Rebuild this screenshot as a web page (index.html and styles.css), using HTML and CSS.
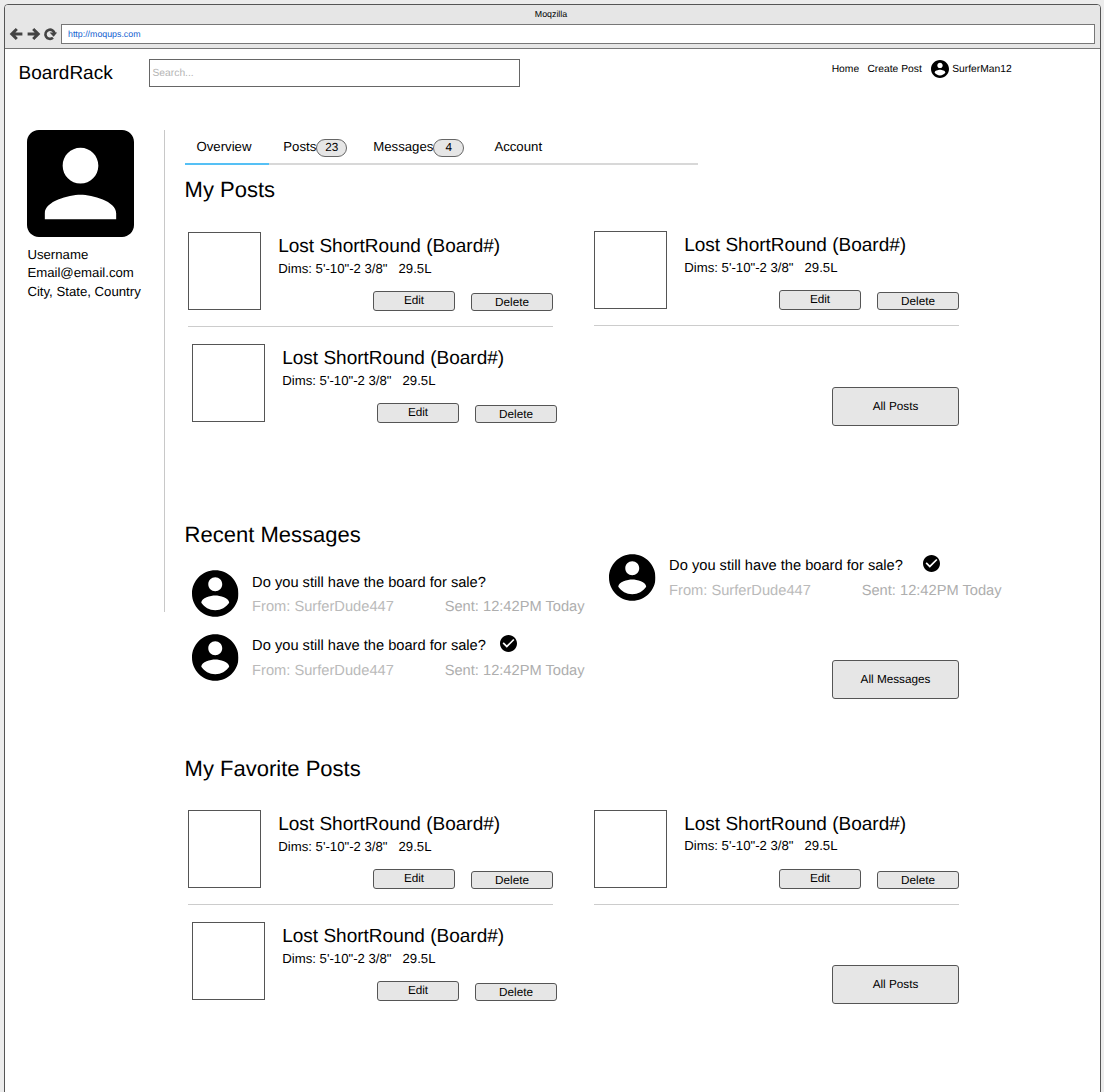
FILE: index.html
```html
<!DOCTYPE html>
<html lang="en">
<head>
<meta charset="utf-8">
<title>BoardRack</title>
<link rel="stylesheet" href="styles.css">
</head>
<body>
<svg class="sprite" width="0" height="0">
  <symbol id="account" viewBox="2 2 20 20"><path d="M12 2C6.48 2 2 6.48 2 12s4.48 10 10 10 10-4.48 10-10S17.52 2 12 2zm0 3c1.66 0 3 1.34 3 3s-1.34 3-3 3-3-1.34-3-3 1.34-3 3-3zm0 14.2c-2.5 0-4.71-1.28-6-3.22.03-1.99 4-3.08 6-3.08 1.99 0 5.97 1.09 6 3.08-1.29 1.94-3.5 3.22-6 3.22z"/></symbol>
  <symbol id="check" viewBox="2 2 20 20"><path d="M12 2C6.48 2 2 6.48 2 12s4.48 10 10 10 10-4.48 10-10S17.52 2 12 2zm-2 15l-5-5 1.41-1.41L10 14.17l7.59-7.59L19 8l-9 9z"/></symbol>
</svg>
<div class="window">
  <header class="chrome">
    <div class="chrome-title">Moqzilla</div>
    <div class="chrome-bar">
      <svg class="chrome-icon" viewBox="0 0 13 12"><path d="M6.8 1L1.8 6l5 5M2.4 6H12.4"/></svg>
      <svg class="chrome-icon" viewBox="0 0 13 12"><path d="M6.2 1l5 5-5 5M10.6 6H.6"/></svg>
      <svg class="chrome-icon" viewBox="0 0 13 12"><path class="arc" d="M9 9.8A4.6 4.6 0 1 1 10.6 5.6"/><path class="tip" d="M5.6 4.6H13.2L9.6 8.8z"/></svg>
      <div class="url">http://moqups.com</div>
    </div>
  </header>

  <div class="topbar">
    <div class="brand">BoardRack</div>
    <div class="search">Search...</div>
    <nav class="nav">
      <span>Home</span>
      <span class="nav-create">Create Post</span>
      <svg class="nav-avatar"><use href="#account"/></svg>
      <span>SurferMan12</span>
    </nav>
  </div>

  <div class="layout">
    <aside class="profile">
      <svg class="portrait" viewBox="3 3 18 18"><path d="M3 5v14c0 1.1.89 2 2 2h14c1.1 0 2-.9 2-2V5c0-1.1-.9-2-2-2H5c-1.11 0-2 .9-2 2zm12 4c0 1.66-1.34 3-3 3s-3-1.34-3-3 1.34-3 3-3 3 1.34 3 3zm-9 8c0-2 4-3.1 6-3.1s6 1.1 6 3.1v1H6v-1z"/></svg>
      <div class="profile-text">
        <div>Username</div>
        <div>Email@email.com</div>
        <div>City, State, Country</div>
      </div>
    </aside>

    <main class="main">
      <div class="tabs">
        <div class="tab tab-active">Overview</div>
        <div class="tab tab-posts">Posts<span class="badge">23</span></div>
        <div class="tab tab-messages">Messages<span class="badge">4</span></div>
        <div class="tab tab-account">Account</div>
      </div>

      <section class="section posts">
        <h2>My Posts</h2>
        <div class="cards">
          <article class="card ruled">
            <div class="thumb"></div>
            <div class="card-body">
              <h3>Lost ShortRound (Board#)</h3>
              <p>Dims: 5'-10"-2 3/8" &nbsp; 29.5L</p>
              <div class="actions"><div class="btn edit">Edit</div><div class="btn delete">Delete</div></div>
            </div>
          </article>
          <article class="card ruled raised">
            <div class="thumb"></div>
            <div class="card-body">
              <h3>Lost ShortRound (Board#)</h3>
              <p>Dims: 5'-10"-2 3/8" &nbsp; 29.5L</p>
              <div class="actions"><div class="btn edit">Edit</div><div class="btn delete">Delete</div></div>
            </div>
          </article>
          <article class="card indented">
            <div class="thumb"></div>
            <div class="card-body">
              <h3>Lost ShortRound (Board#)</h3>
              <p>Dims: 5'-10"-2 3/8" &nbsp; 29.5L</p>
              <div class="actions"><div class="btn edit">Edit</div><div class="btn delete">Delete</div></div>
            </div>
          </article>
          <div class="btn more">All Posts</div>
        </div>
      </section>

      <section class="section messages">
        <h2>Recent Messages</h2>
        <div class="inbox">
          <div class="inbox-left">
            <article class="message compact">
              <svg class="avatar"><use href="#account"/></svg>
              <div class="message-body">
                <div class="subject">Do you still have the board for sale?</div>
                <div class="meta"><span class="from">From: SurferDude447</span><span class="sent">Sent: 12:42PM Today</span></div>
              </div>
            </article>
            <article class="message">
              <svg class="avatar"><use href="#account"/></svg>
              <div class="message-body">
                <div class="subject">Do you still have the board for sale?<svg class="tick"><use href="#check"/></svg></div>
                <div class="meta"><span class="from">From: SurferDude447</span><span class="sent">Sent: 12:42PM Today</span></div>
              </div>
            </article>
          </div>
          <div class="inbox-right">
            <article class="message">
              <svg class="avatar"><use href="#account"/></svg>
              <div class="message-body">
                <div class="subject">Do you still have the board for sale?<svg class="tick tick-far"><use href="#check"/></svg></div>
                <div class="meta"><span class="from">From: SurferDude447</span><span class="sent">Sent: 12:42PM Today</span></div>
              </div>
            </article>
            <div class="btn more">All Messages</div>
          </div>
        </div>
      </section>

      <section class="section favorites">
        <h2>My Favorite Posts</h2>
        <div class="cards">
          <article class="card ruled">
            <div class="thumb"></div>
            <div class="card-body">
              <h3>Lost ShortRound (Board#)</h3>
              <p>Dims: 5'-10"-2 3/8" &nbsp; 29.5L</p>
              <div class="actions"><div class="btn edit">Edit</div><div class="btn delete">Delete</div></div>
            </div>
          </article>
          <article class="card ruled">
            <div class="thumb"></div>
            <div class="card-body">
              <h3>Lost ShortRound (Board#)</h3>
              <p class="dims-tight">Dims: 5'-10"-2 3/8" &nbsp; 29.5L</p>
              <div class="actions"><div class="btn edit">Edit</div><div class="btn delete">Delete</div></div>
            </div>
          </article>
          <article class="card indented">
            <div class="thumb"></div>
            <div class="card-body">
              <h3>Lost ShortRound (Board#)</h3>
              <p>Dims: 5'-10"-2 3/8" &nbsp; 29.5L</p>
              <div class="actions"><div class="btn edit">Edit</div><div class="btn delete">Delete</div></div>
            </div>
          </article>
          <div class="btn more">All Posts</div>
        </div>
      </section>
    </main>
  </div>
</div>
</body>
</html>
```
FILE: styles.css
```css
* { box-sizing: border-box; }

body {
  margin: 0;
  height: 1092px;
  padding: 4px 3px 0 4px;
  overflow: hidden;
  background: #ececec;
  color: #000;
  font-family: "Liberation Sans", Arial, Helvetica, sans-serif;
  font-size: 13.2px;
  text-rendering: geometricPrecision;
  white-space: nowrap;
}

h2, h3, p { margin: 0; font-weight: 400; }
svg { display: block; flex: none; }
.sprite { position: absolute; }

.window {
  height: 1100px;
  border: 1px solid #555;
  border-radius: 4px 4px 0 0;
  background: #fff;
  overflow: hidden;
}

/* Browser chrome */
.chrome {
  height: 44px;
  border-bottom: 1px solid #777;
  background: #e6e6e6;
}
.chrome-title {
  height: 19px;
  padding-right: 3px;
  font-size: 8.82px;
  line-height: 18px;
  text-align: center;
}
.chrome-bar {
  display: flex;
  align-items: center;
  gap: 4px;
  padding: 0 5px 0 5px;
}
.chrome-icon {
  width: 13px;
  height: 12px;
  fill: none;
  stroke: #444;
  stroke-width: 3;
  overflow: visible;
}
.chrome-icon .arc { stroke-width: 2.6; }
.chrome-icon .tip { fill: #444; stroke: none; }
.url {
  flex: 1;
  height: 20px;
  padding-left: 6px;
  border: 1px solid #777;
  background: #fff;
  color: #1160d0;
  font-size: 8.82px;
  line-height: 18px;
}

/* Site header */
.topbar {
  display: flex;
  align-items: flex-start;
  height: 81px;
  padding: 10px 0 0 13.6px;
}
.brand {
  width: 130.4px;
  padding-top: 4px;
  font-size: 19.05px;
  line-height: 22px;
}
.search {
  width: 371px;
  height: 28px;
  padding-left: 2.5px;
  border: 1px solid #666;
  color: #b4b4b4;
  font-size: 10.3px;
  line-height: 27px;
}
.nav {
  display: flex;
  align-items: center;
  height: 21px;
  margin-left: 311.7px;
  font-size: 10.3px;
}
.nav-create { margin-left: 8.3px; }
.nav-avatar { width: 18px; height: 18px; margin: -2px 2.8px 0 9.6px; }

/* Page columns */
.layout { display: flex; align-items: flex-start; }
.profile {
  width: 160px;
  height: 482px;
  padding-left: 22.4px;
  border-right: 1px solid #c8c8c8;
}
.portrait { width: 107px; height: 107px; }
.profile-text { padding-top: 8.7px; line-height: 18.5px; }
.main { padding-left: 20px; }

/* Tabs */
.tabs {
  display: flex;
  width: 513px;
  height: 35px;
  border-bottom: 2px solid #d8d8d8;
}
.tab { display: flex; align-items: center; height: 33px; }
.tab-active {
  width: 84px;
  height: 35px;
  padding-left: 11.5px;
  border-bottom: 2px solid #55c0f5;
}
.tab-posts { margin-left: 14.3px; }
.tab-messages { margin-left: 26px; }
.tab-account { margin-left: 30px; }
.badge {
  width: 31px;
  height: 18px;
  margin: 2px 0 0;
  border: 1px solid #666;
  border-radius: 9px;
  background: #e6e6e6;
  font-size: 11.76px;
  line-height: 15px;
  text-align: center;
}

/* Sections */
.section h2 { font-size: 22px; line-height: 24px; text-indent: -.4px; }
.posts { height: 345px; padding-top: 12.6px; }
.messages { height: 234px; padding-top: 12.6px; }
.favorites { padding-top: 12.8px; }

/* Board cards */
.cards {
  display: grid;
  grid-template-columns: 406px 365px;
  grid-template-rows: 112px auto;
  align-items: start;
  padding: 30.4px 0 0 3px;
}
.favorites .cards { padding-top: 29.2px; }
.card { display: flex; width: 365px; }
.ruled { height: 95.5px; border-bottom: 1px solid #ccc; }
.raised { margin-top: -1px; }
.indented { margin-left: 4px; }
.thumb { width: 73px; height: 78px; border: 1px solid #555; }
.card-body { flex: 1; padding: 4px 0 0 17.2px; }
.card h3 { font-size: 19.02px; line-height: 22px; }
.card p { padding-top: 3px; line-height: 16px; }
.actions {
  display: flex;
  justify-content: flex-end;
  align-items: flex-end;
  gap: 16px;
  padding-top: 14px;
}
.card .dims-tight { padding-top: 2px; }
.dims-tight + .actions { padding-top: 15px; }

.btn {
  border: 1px solid #555;
  border-radius: 3px;
  background: #e6e6e6;
  font-size: 11.76px;
  text-align: center;
}
.edit { width: 82px; height: 20px; line-height: 17px; }
.delete { width: 82px; height: 18px; line-height: 17px; }
.more { width: 127px; height: 39px; line-height: 37px; }
.cards .more { justify-self: end; margin-top: 43px; }

/* Messages */
.inbox { display: flex; padding: 7.4px 0 0 7px; }
.inbox-left { width: 417px; padding-top: 16px; }
.message { display: flex; height: 64px; }
.avatar { width: 46.5px; height: 47px; }
.message-body { padding: 3px 0 0 13.6px; font-size: 14.67px; line-height: 18px; }
.subject { display: flex; }
.meta { display: flex; padding-top: 7px; }
.compact .message-body { padding-top: 4px; }
.compact .meta { padding-top: 6px; }
.from { width: 192.6px; color: #bababa; }
.sent { color: #aeaeae; }
.tick { width: 17px; height: 17px; margin: -2px 0 0 14px; }
.tick-far { margin-left: 20.4px; }
.inbox-right .more { margin: 42px 0 0 223px; }
```
